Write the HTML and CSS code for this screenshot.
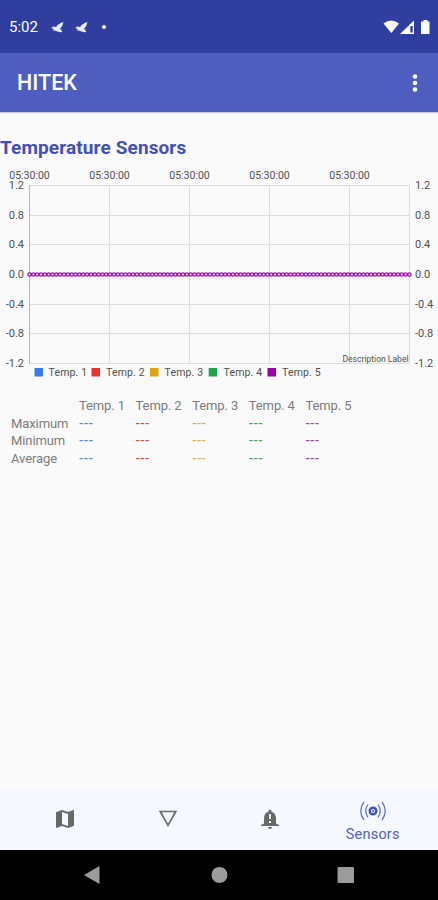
FILE: index.html
```html
<!DOCTYPE html>
<html lang="en">
  <head>
    <meta charset="utf-8">
    <title>HITEK</title>
    <meta name="viewport" content="width=device-width, initial-scale=1">
    <link rel="stylesheet" href="styles.css">
  </head>
  <body>
    <div class="app">
      <header class="status">
        <span class="time">5:02</span>
        <svg class="bird" viewBox="0 0 14 12"><path d="M0 6.500 L2.500 5 L5.500 5.500 Q8 1.500 13.500 0 Q13 4.500 9.500 7.500 L12 8.500 L10.800 9.300 L12.500 11 Q8 11.500 5 9.500 L1.500 9 L3 7.500 Z" /></svg>
        <svg class="bird" viewBox="0 0 14 12"><path d="M0 6.500 L2.500 5 L5.500 5.500 Q8 1.500 13.500 0 Q13 4.500 9.500 7.500 L12 8.500 L10.800 9.300 L12.500 11 Q8 11.500 5 9.500 L1.500 9 L3 7.500 Z" /></svg>
        <span class="dot"></span>
        <svg class="signals" viewBox="0 0 48 16">
          <path d="M0.500 4.500 Q8 -1.500 16 4.500 L8.300 14 Z" />
          <path d="M17 15 L31 1.500 V15 Z" />
          <path class="signals-gap" d="M27.300 7 V13.500 H29.700 V7 Z" />
          <path d="M38 2.500 H40.500 V1 H44.500 V2.500 H46.500 V15 H38 Z" />
        </svg>
      </header>

      <div class="toolbar">
        <h1 class="name">HITEK</h1>
        <svg class="more" viewBox="0 0 6 18">
          <circle cx="3" cy="2.5" r="2.3" />
          <circle cx="3" cy="9" r="2.3" />
          <circle cx="3" cy="15.5" r="2.3" />
        </svg>
      </div>

      <main class="content">
        <h2 class="title">Temperature Sensors</h2>

        <svg class="chart" viewBox="0 0 438 218">
          <path class="grid" d="M29 23.500 H409 M29 53.500 H409 M29 82.500 H409 M29 112.500 H409 M29 142.500 H409 M29 171.500 H409 M29 201.500 H409 M109.500 23 V201 M189.500 23 V201 M269.500 23 V201 M349.500 23 V201 M409.500 23 V201" />
          <path class="axis" d="M29.500 23 V202" />
          <g class="hours">
            <text x="29.5" y="16.500">05:30:00</text>
            <text x="109.5" y="16.500">05:30:00</text>
            <text x="189.5" y="16.500">05:30:00</text>
            <text x="269.5" y="16.500">05:30:00</text>
            <text x="349.5" y="16.500">05:30:00</text>
          </g>
          <g class="left">
            <text x="24" y="27">1.2</text>
            <text x="24" y="56.500">0.8</text>
            <text x="24" y="86">0.4</text>
            <text x="24" y="115.500">0.0</text>
            <text x="24" y="145.5">-0.4</text>
            <text x="24" y="175">-0.8</text>
            <text x="24" y="205">-1.2</text>
          </g>
          <g class="right">
            <text x="415" y="27">1.2</text>
            <text x="415" y="56.500">0.8</text>
            <text x="415" y="86">0.4</text>
            <text x="415" y="115.500">0.0</text>
            <text x="415" y="145.5">-0.4</text>
            <text x="415" y="175">-0.8</text>
            <text x="415" y="205">-1.2</text>
          </g>
          <!-- readings: dots with hollow centers -->
          <path class="line" d="M29.500 112.500 H409.600" />
          <path class="points" d="M29.500 112.500 H409.600" />
          <path class="holes" d="M29.500 112.500 H409.600" />
          <text class="description" x="408.5" y="200" textLength="66">Description Label</text>
          <g class="legend">
            <rect class="fill-blue" x="34.5" y="206" width="8.5" height="8.500" /><text x="48.500" y="214">Temp. 1</text>
            <rect class="fill-red" x="91.5" y="206" width="8.5" height="8.500" /><text x="106" y="214">Temp. 2</text>
            <rect class="fill-yellow" x="150" y="206" width="8.5" height="8.500" /><text x="164.500" y="214">Temp. 3</text>
            <rect class="fill-green" x="208.700" y="206" width="8.5" height="8.500" /><text x="223.500" y="214">Temp. 4</text>
            <rect class="fill-purple" x="267.500" y="206" width="8.5" height="8.500" /><text x="282" y="214">Temp. 5</text>
          </g>
        </svg>

        <div class="table">
          <span></span><span>Temp. 1</span><span>Temp. 2</span><span>Temp. 3</span><span>Temp. 4</span><span>Temp. 5</span>
          <span>Maximum</span><b class="blue">---</b><b class="red">---</b><b class="yellow">---</b><b class="green">---</b><b class="purple">---</b>
          <span>Minimum</span><b class="blue">---</b><b class="red">---</b><b class="yellow">---</b><b class="green">---</b><b class="purple">---</b>
          <span>Average</span><b class="blue">---</b><b class="red">---</b><b class="yellow">---</b><b class="green">---</b><b class="purple">---</b>
        </div>
      </main>

      <nav class="tabs">
        <a class="tab" title="Map">
          <svg viewBox="0 0 24 24"><path d="M20.500 3l-.16.030L15 5.100 9 3 3.360 4.900c-.21.070-.36.250-.36.480V20.500c0 .28.220.5.500.5l.16-.030L9 18.900l6 2.100 5.640-1.900c.21-.070.36-.25.360-.48V3.500c0-.28-.22-.5-.5-.5zM15 19l-6-2.110V5l6 2.110V19z" /></svg>
        </a>
        <a class="tab" title="Filter">
          <svg viewBox="0 0 24 24"><path class="outline" d="M4.300 4.500 H19.700 L12 18.300 Z" /></svg>
        </a>
        <a class="tab" title="Alerts">
          <svg viewBox="0 0 24 24"><path fill-rule="evenodd" d="M10 20h4c0 1.100-.9 2-2 2s-2-.9-2-2zM18 16.500V11c0-3.070-1.630-5.640-4.500-6.320V4a1.500 1.500 0 0 0-3 0v.68C7.640 5.360 6 7.920 6 11v5.500l-3 1.500v1h18v-1zM11 7h2v5h-2zM11 14h2v2h-2z" /></svg>
        </a>
        <a class="tab tab--active">
          <svg viewBox="0 0 28 22">
            <circle class="ring" cx="14" cy="11" r="3.300" />
            <circle cx="14" cy="11" r="1" />
            <path class="wave" d="M9 4.500 Q4.500 11 9 17.500 M19 4.500 Q23.500 11 19 17.500 M5 2 Q-1.500 11 5 20 M23 2 Q29.500 11 23 20" />
          </svg>
          <span>Sensors</span>
        </a>
      </nav>

      <footer class="system">
        <svg viewBox="0 0 438 50">
          <path d="M84 25 L99.500 16 V34 Z" />
          <circle cx="219.500" cy="25" r="8" />
          <rect x="337.500" y="17" width="16.500" height="16" rx="1" />
        </svg>
      </footer>
    </div>
  </body>
</html>
```
FILE: styles.css
```css
body {
  margin: 0;
  font-family: Roboto, sans-serif;
  background-color: #fafafa;
}
.app {
  display: flex;
  flex-direction: column;
  height: 900px;
  max-width: 438px;
}
.status {
  display: flex;
  align-items: center;
  box-sizing: border-box;
  height: 53px;
  padding: 1px 6px 0 9px;
  background-color: #303f9f;
  color: #fff;
}
.time {
  width: 42px;
  font-size: 15px;
}
.bird {
  width: 13px;
  height: 11px;
  margin-right: 11px;
  fill: #e8eaff;
}
.dot {
  width: 4px;
  height: 4px;
  margin-left: 3px;
  border-radius: 50%;
  background-color: #fff;
}
.signals {
  width: 48px;
  height: 16px;
  margin-left: auto;
  margin-right: 1px;
  fill: #fff;
}
.signals .signals-gap {
  fill: #303f9f;
}
.toolbar {
  display: flex;
  align-items: center;
  justify-content: space-between;
  box-sizing: border-box;
  height: 59px;
  padding: 0 20px 0 17px;
  background-color: #4f5dc0;
  color: #fff;
  box-shadow: 0 1px 1px #c5c7dd;
}
.name {
  margin: 0;
  font-size: 21.500px;
  font-weight: 500;
}
.more {
  width: 6px;
  height: 18px;
  fill: #fff;
}
.content {
  flex: 1;
}
.title {
  margin: 25px 0 3px;
  font-size: 19px;
  line-height: 22px;
  font-weight: 700;
  letter-spacing: .12px;
  color: #4250b5;
}
.chart {
  display: block;
  width: 438px;
  height: 218px;
  font-size: 10.500px;
  fill: #505050;
}
.grid {
  fill: none;
  stroke: #dcdcdc;
}
.axis {
  stroke: #b8b8b8;
}
.hours {
  text-anchor: middle;
}
.left {
  text-anchor: end;
}
.left, .right {
  font-size: 11px;
}
.line {
  stroke: #9c16a8;
}
.points {
  stroke: #9c16a8;
  stroke-width: 4.600;
  stroke-linecap: round;
  stroke-dasharray: 0 3.838;
}
.holes {
  stroke: #f3dff5;
  stroke-width: 2.100;
  stroke-linecap: round;
  stroke-dasharray: 0 3.838;
}
.description {
  font-size: 8.500px;
  text-anchor: end;
}
.legend {
  font-size: 10.500px;
  letter-spacing: .15px;
}
.fill-blue { fill: #347bf0; }
.fill-red { fill: #e5352b; }
.fill-yellow { fill: #dfa30c; }
.fill-green { fill: #20a446; }
.fill-purple { fill: #9b00a8; }
.table {
  display: grid;
  grid-template-columns: 68px repeat(5, 56.600px);
  grid-template-rows: 19px repeat(3, 17.300px);
  align-items: center;
  margin-top: 16px;
  padding-left: 11px;
  font-size: 13px;
  line-height: 17px;
  letter-spacing: -.1px;
  color: #7b7b7b;
}
.table b {
  font-weight: 500;
  letter-spacing: .3px;
}
.blue { color: #4a85f0; }
.red { color: #dc4940; }
.yellow { color: #e0ad42; }
.green { color: #41a35c; }
.purple { color: #a445af; }
.tabs {
  display: flex;
  box-sizing: border-box;
  height: 62px;
  padding: 0 14px;
  background-color: #f5f8ff;
}
.tab {
  display: flex;
  flex: 1;
  flex-direction: column;
  align-items: center;
  justify-content: center;
  fill: #686868;
}
.tab svg {
  width: 24px;
  height: 24px;
}
.tab--active {
  justify-content: flex-start;
  padding-top: 12px;
  font-size: 14.500px;
  line-height: 17px;
  letter-spacing: .2px;
  color: #5360bd;
  fill: #4050bd;
}
.tab--active svg {
  width: 28px;
  height: 22px;
  margin-bottom: 4px;
}
.outline {
  fill: none;
  stroke: #686868;
  stroke-width: 1.700;
}
.ring {
  fill: none;
  stroke: #4050bd;
  stroke-width: 2.400;
}
.wave {
  fill: none;
  stroke: #6672c6;
  stroke-width: 1.300;
}
.system {
  height: 50px;
  background-color: #000;
}
.system svg {
  display: block;
  width: 438px;
  height: 50px;
  fill: #9c9c9c;
}
```
